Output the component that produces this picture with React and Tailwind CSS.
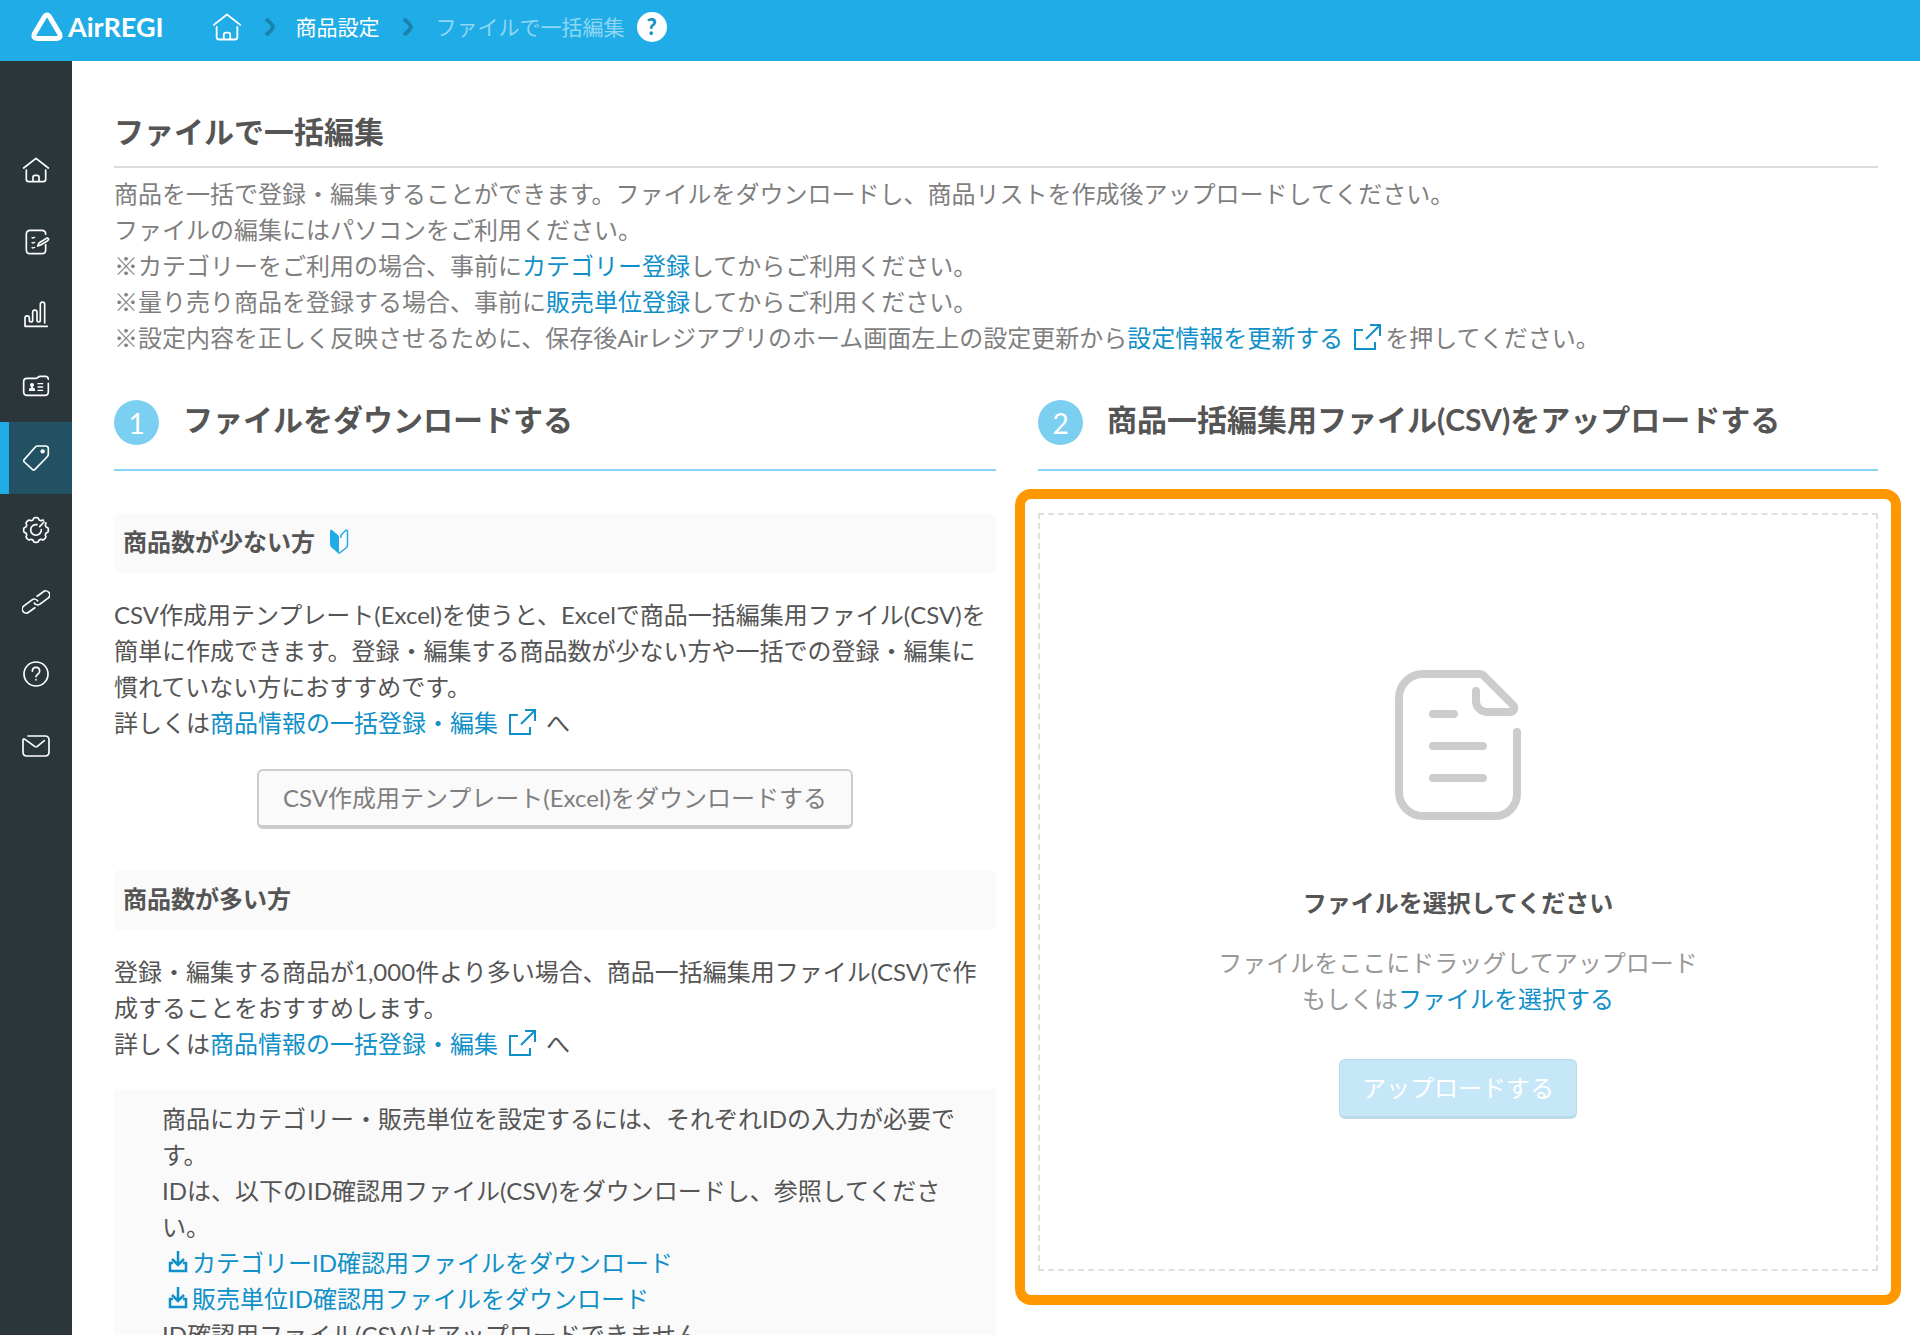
import React from "react";

const gearPath =
  Array.from({ length: 133 }, (_, i) => {
    const t = -0.62 + (i / 132) * (Math.PI * 2 - 0.3);
    const r = 34 + 3 * Math.tanh(2.2 * Math.cos(8 * t) + 0.6);
    const x = (42 + r * Math.cos(t)).toFixed(1);
    const y = (42 + r * Math.sin(t)).toFixed(1);
    return (i === 0 ? "M" : "L") + x + " " + y;
  }).join("");

function Icon({ children, className = "size-7" }) {
  return (
    <svg
      viewBox="0 0 84 84"
      className={className}
      fill="none"
      stroke="currentColor"
      strokeWidth="5"
      strokeLinecap="round"
      strokeLinejoin="round"
      aria-hidden="true"
    >
      {children}
    </svg>
  );
}

const HomeShape = () => (
  <>
    <path d="M5 36L42 7l37 29" />
    <path d="M13 42v28q0 7 7 7h44q7 0 7-7V42" />
    <path d="M33 76V64q0-6 6-6h6q6 0 6 6v12" />
  </>
);

const NAV = [
  { label: "ホーム", shape: <HomeShape /> },
  {
    label: "注文",
    shape: (
      <>
        <path d="M71 19Q71 7 59 7H25Q13 7 13 19v46q0 12 12 12h34q12 0 12-12V50" />
        <path d="M47 54l4-9 22-14q4-2 6 1t-2 6L56 51z" />
        <path d="M30 29l3 1 5-2M30 44l3 1 5-2M30 59l3 1 5-2" strokeWidth="4" />
      </>
    ),
  },
  {
    label: "売上",
    shape: (
      <path d="M76 79H9V54a6.500 6.500 0 0 1 13 0v7a5 5 0 0 0 10 0V37a6.500 6.500 0 0 1 13 0v24a5 5 0 0 0 10 0V13a6.500 6.500 0 0 1 13 0v56" />
    ),
  },
  {
    label: "顧客",
    shape: (
      <>
        <path d="M79 34v26q0 10-10 10H15Q5 70 5 60V29q0-10 10-10h27q4 0 6-3t7-3h15q9 0 9 9" />
        <g fill="currentColor" stroke="none">
          <circle cx="30" cy="39" r="6" />
          <path d="M21 57v-5q0-4 6-5l1-4h4l1 4q6 1 6 5v5z" />
        </g>
        <path d="M48 35h14M48 45h14M48 55h14" strokeWidth="4" />
      </>
    ),
  },
  {
    label: "商品設定",
    active: true,
    shape: (
      <>
        <path d="M46 6h25q8 0 8 8v16q0 5-4 9L39 76q-4 4-8 0L7 54q-4-4 0-8L40 9q3-3 6-3z" />
        <circle cx="62" cy="22" r="6.500" fill="currentColor" stroke="none" />
      </>
    ),
  },
  {
    label: "設定",
    shape: (
      <>
        <path d={gearPath} />
        <path d="M45 26a16 16 0 1 0 13 15" />
        <path d="M53 32l13-14" />
      </>
    ),
  },
  {
    label: "連携",
    shape: (
      <g transform="rotate(-36 42 42)">
        <path d="M29 54H6a12 12 0 0 1 0-24h30a12 12 0 0 1 12 12" />
        <path d="M55 30h23a12 12 0 0 1 0 24H48a12 12 0 0 1-12-12" />
      </g>
    ),
  },
  {
    label: "ヘルプ",
    shape: (
      <>
        <circle cx="42" cy="42" r="36" />
        <path d="M31 34q0-12 11-12t11 11q0 6-5 9t-6 8" />
        <path d="M42 59v1" />
      </>
    ),
  },
  {
    label: "お知らせ",
    shape: (
      <path d="M18 12h51q12 0 12 12v36q0 12-12 12H14Q3 72 3 60V25q0-6 6-3l30 22q3 2 6 0l22-18" />
    ),
  },
];

function ExternalIcon({ className = "mx-[10px]" }) {
  return (
    <svg
      viewBox="0 0 28 28"
      className={"inline-block size-7 align-[-4px] " + className}
      fill="none"
      stroke="currentColor"
      strokeWidth="2"
      aria-hidden="true"
    >
      <path d="M10 7H2v19h20v-7" />
      <path d="M13 16L26 3M17 2h10v11" />
    </svg>
  );
}

function DownloadIcon() {
  return (
    <svg
      viewBox="0 0 20 22"
      className="mr-[3px] ml-[5px] inline-block h-[22px] w-[22px] align-[-1px]"
      fill="none"
      stroke="currentColor"
      strokeWidth="2.500"
      aria-hidden="true"
    >
      <path d="M10 0v14M4 8l6 6 6-6" />
      <path d="M5 12H2v8h16v-8h-3" />
    </svg>
  );
}

function BeginnerIcon() {
  return (
    <svg viewBox="0 0 20 26" className="h-[26px] w-5 text-[#20ade7]" aria-hidden="true">
      <path d="M1 2q0-2 2-1l7 6v18l-8-7q-1-1-1-3z" fill="currentColor" />
      <path d="M10 24.500l7.500-6q1-1 1-3V2.500q0-2-2-1L12 6v3" fill="none" stroke="currentColor" strokeWidth="1.500" />
    </svg>
  );
}

function FileIcon() {
  return (
    <svg
      viewBox="0 0 126 150"
      className="h-[150px] w-[126px] text-[#ccc]"
      fill="none"
      stroke="currentColor"
      strokeWidth="8"
      strokeLinecap="round"
      strokeLinejoin="round"
      aria-hidden="true"
    >
      <path d="M122 62v62a22 22 0 0 1-22 22H28a24 24 0 0 1-24-24V28A24 24 0 0 1 28 4h56q3 0 5 2l29 29c3 4 0 7-3 7H92A11 11 0 0 1 81 31V21" />
      <path d="M38 44h21M38 76h50M38 108h50" />
    </svg>
  );
}

function Chevron() {
  return (
    <svg viewBox="0 0 12 18" className="h-[18px] w-3 text-[#1b81ad]" fill="none" stroke="currentColor" strokeWidth="4" aria-hidden="true">
      <path d="M2 1q7 6 7 8t-7 8" />
    </svg>
  );
}

function TextLink({ children }) {
  return (
    <a href="#" className="text-[#0f90c8]">
      {children}
    </a>
  );
}

function StepHeading({ number, children }) {
  return (
    <div className="flex items-start gap-6 border-b-2 border-[#87d4f1] pb-6">
      <span className="flex size-[45px] shrink-0 items-center justify-center rounded-full bg-[#7bcff0] text-[28px] leading-none text-white">
        {number}
      </span>
      <h2 className="text-[30px] leading-[38px] font-bold">{children}</h2>
    </div>
  );
}

function SubHeading({ children }) {
  return (
    <h3 className="flex h-[60px] items-center gap-[14px] rounded-md bg-[#fafafa] px-[9px] pb-[2px] font-bold">{children}</h3>
  );
}

export default function App() {
  return (
    <div
      lang="ja"
      className="flex h-screen flex-col overflow-hidden bg-white font-[Lato,'Noto_Sans_CJK_JP',sans-serif] text-2xl leading-9 text-[#555]"
    >
      <header className="flex h-[61px] shrink-0 items-center bg-[#20ade7] pb-2 pl-[31px] text-[21px] text-white">
        <a href="#" className="flex items-center gap-[5px]">
          <svg viewBox="0 0 32 30" className="h-[30px] w-8" fill="none" stroke="currentColor" strokeWidth="5" strokeLinejoin="round" aria-hidden="true">
            <path d="M13 5.500q3-5 6 0l9.500 16q2 5-3 5h-19q-5 0-3-5z" />
          </svg>
          <span className="text-[27px] leading-8 font-bold">AirREGI</span>
        </a>
        <nav aria-label="パンくず" className="ml-12 flex items-center">
          <a href="#" aria-label="ホーム">
            <Icon className="size-[30px]">
              <HomeShape />
            </Icon>
          </a>
          <span className="mr-5 ml-[22px]">
            <Chevron />
          </span>
          <a href="#">商品設定</a>
          <span className="mx-[22px]">
            <Chevron />
          </span>
          <span className="text-[#8fd6f3]">ファイルで一括編集</span>
        </nav>
        <button type="button" aria-label="ヘルプ" className="ml-3 flex size-[30px] items-center justify-center rounded-full bg-white text-[22px] leading-none font-black text-[#1593c8]">
          ?
        </button>
      </header>

      <div className="flex min-h-0 flex-1">
        <nav aria-label="メニュー" className="w-[72px] shrink-0 bg-[#2b363a] pt-[73px] text-white">
          {NAV.map((item) => (
            <a
              key={item.label}
              href="#"
              aria-label={item.label}
              className={
                item.active
                  ? "flex h-[72px] items-center justify-center border-l-[9px] border-[#20ade7] bg-[#215163] pr-[9px]"
                  : "flex h-[72px] items-center justify-center"
              }
            >
              <Icon>{item.shape}</Icon>
            </a>
          ))}
        </nav>

        <main className="min-w-0 flex-1 overflow-y-auto px-[42px] pt-12 [scrollbar-width:none]">
          <h1 className="border-b-2 border-[#ddd] pb-[13px] text-[30px] leading-[44px] font-bold">ファイルで一括編集</h1>
          <p className="mt-2 text-[#7f7f7f]">
            商品を一括で登録・編集することができます。ファイルをダウンロードし、商品リストを作成後アップロードしてください。
            <br />
            ファイルの編集にはパソコンをご利用ください。
            <br />
            ※カテゴリーをご利用の場合、事前に<TextLink>カテゴリー登録</TextLink>してからご利用ください。
            <br />
            ※量り売り商品を登録する場合、事前に<TextLink>販売単位登録</TextLink>してからご利用ください。
            <br />
            ※設定内容を正しく反映させるために、保存後Airレジアプリのホーム画面左上の設定更新から
            <TextLink>
              設定情報を更新する
              <ExternalIcon className="mr-1 ml-[10px]" />
            </TextLink>
            を押してください。
          </p>

          <div className="mt-11 grid grid-cols-[21fr_20fr] gap-[42px]">
            <section>
              <StepHeading number="1">ファイルをダウンロードする</StepHeading>
              <div className="mt-[42px]">
                <SubHeading>
                  商品数が少ない方
                  <BeginnerIcon />
                </SubHeading>
              </div>
              <p className="mt-6">
                CSV作成用テンプレート(Excel)を使うと、Excelで商品一括編集用ファイル(CSV)を簡単に作成できます。登録・編集する商品数が少ない方や一括での登録・編集に慣れていない方におすすめです。
                <br />
                詳しくは
                <TextLink>
                  商品情報の一括登録・編集
                  <ExternalIcon />
                </TextLink>
                へ
              </p>
              <div className="mt-7 flex justify-center">
                <button type="button" className="h-[60px] rounded-md border-2 border-b-4 border-[#ccc] bg-[#fafafa] px-6 text-[#7f7f7f]">
                  CSV作成用テンプレート(Excel)をダウンロードする
                </button>
              </div>
              <div className="mt-[41px]">
                <SubHeading>商品数が多い方</SubHeading>
              </div>
              <p className="mt-6">
                登録・編集する商品が1,000件より多い場合、商品一括編集用ファイル(CSV)で作成することをおすすめします。
                <br />
                詳しくは
                <TextLink>
                  商品情報の一括登録・編集
                  <ExternalIcon />
                </TextLink>
                へ
              </p>
              <div className="mt-[27px] bg-[#fafafa] py-3 pr-[38px] pl-12">
                <p>
                  商品にカテゴリー・販売単位を設定するには、それぞれIDの入力が必要です。
                  <br />
                  IDは、以下のID確認用ファイル(CSV)をダウンロードし、参照してください。
                  <br />
                  <TextLink>
                    <DownloadIcon />
                    カテゴリーID確認用ファイルをダウンロード
                  </TextLink>
                  <br />
                  <TextLink>
                    <DownloadIcon />
                    販売単位ID確認用ファイルをダウンロード
                  </TextLink>
                  <br />
                  ID確認用ファイル(CSV)はアップロードできません。
                </p>
              </div>
            </section>

            <section>
              <StepHeading number="2">商品一括編集用ファイル(CSV)をアップロードする</StepHeading>
              <div className="relative mt-[42px]">
                <div className="pointer-events-none absolute -inset-x-[23px] -top-6 -bottom-[34px] rounded-2xl border-[10px] border-[#ff9800]" />
                <div className="flex flex-col items-center border-2 border-dashed border-[#e0e0e0] pt-[155px] pb-[150px] text-center">
                  <FileIcon />
                  <p className="mt-[65px] font-bold">ファイルを選択してください</p>
                  <p className="mt-6 text-[#999]">
                    ファイルをここにドラッグしてアップロード
                    <br />
                    もしくは<TextLink>ファイルを選択する</TextLink>
                  </p>
                  <button type="button" disabled className="mt-[42px] h-[60px] rounded-md border border-b-[3px] border-[#badbe9] bg-[#c5e7f7] px-[22px] text-white">
                    アップロードする
                  </button>
                </div>
              </div>
            </section>
          </div>
        </main>
      </div>
    </div>
  );
}
